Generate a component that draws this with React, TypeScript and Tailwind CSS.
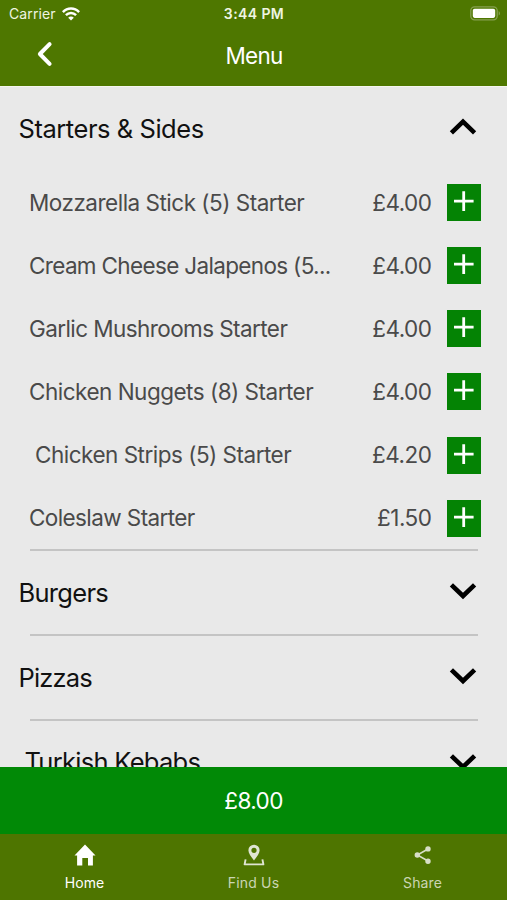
import React from "react";

type Item = { name: string; price: string; tracking?: string };

const items: Item[] = [
  { name: "Mozzarella Stick (5) Starter", price: "£4.00", tracking: "tracking-[-0.5px]" },
  { name: "Cream Cheese Jalapenos (5...", price: "£4.00", tracking: "tracking-[-0.66px]" },
  { name: "Garlic Mushrooms Starter", price: "£4.00", tracking: "tracking-[-0.58px]" },
  { name: "Chicken Nuggets (8) Starter", price: "£4.00", tracking: "tracking-[-0.5px]" },
  { name: "Chicken Strips (5) Starter", price: "£4.20", tracking: "pl-[6px] tracking-[-0.5px]" },
  { name: "Coleslaw Starter", price: "£1.50", tracking: "tracking-[-0.6px]" },
];

function Chevron({ up = false }: { up?: boolean }) {
  return (
    <svg width="28" height="18" viewBox="0 0 28 18" fill="none" stroke="#000" strokeWidth="4.6">
      <path d={up ? "M2.4 14.8 L14 3.6 L25.6 14.8" : "M2.4 2.8 L14 14 L25.6 2.8"} />
    </svg>
  );
}

function StatusBar() {
  return (
    <div className="flex h-[27px] items-center justify-between pl-[9px] pr-[6px] text-[14px] text-[#eef5e2]">
      <div className="flex w-[150px] items-center gap-[6px]">
        <span className="tracking-[0.1px]">Carrier</span>
        <svg width="18" height="14" viewBox="0 0 18 14" fill="none" stroke="#fff" strokeWidth="2.5">
          <path d="M0.9 5.2 C5.4 0.4 12.6 0.4 17.1 5.2" />
          <path d="M3.9 8.2 C6.8 5.3 11.2 5.3 14.1 8.2" />
          <path d="M9 13.6 L6.2 10.7 C7.7 9.2 10.3 9.2 11.8 10.7 Z" fill="#fff" stroke="none" />
        </svg>
      </div>
      <span className="mr-[2px] text-[14px] font-semibold tracking-[0.4px]">3:44 PM</span>
      <div className="flex w-[150px] justify-end">
        <svg width="31" height="15" viewBox="0 0 31 15">
          <rect x="0.8" y="0.8" width="26.4" height="13" rx="3.8" fill="none" stroke="#86a050" strokeWidth="1.3" />
          <rect x="2.8" y="2.7" width="22.4" height="9.2" rx="1.8" fill="#fff" />
          <path d="M28.7 5 C30.4 5.8 30.4 8.8 28.7 9.6 Z" fill="#86a050" />
        </svg>
      </div>
    </div>
  );
}

function NavBar() {
  return (
    <div className="grid h-[58px] grid-cols-[80px_1fr_80px] items-center text-white">
      <button className="flex justify-start pb-1 pl-9">
        <svg width="18" height="26" viewBox="0 0 18 26" fill="none" stroke="#fff" strokeWidth="4" strokeLinecap="round" strokeLinejoin="round">
          <path d="M13.6 3.2 L3.9 13 L13.6 22.8" />
        </svg>
      </button>
      <h1 className="pl-px text-center text-[22.5px] tracking-[-0.7px]">Menu</h1>
    </div>
  );
}

function ItemRow({ name, price, tracking }: Item) {
  return (
    <div className="flex h-[63.15px] items-center pl-[29px] pr-[26px] text-[22.5px] text-[#4a4a4a]">
      <div className="flex-1 whitespace-nowrap">
        <span className={tracking}>{name}</span>
      </div>
      <span className="mr-[15.5px] tracking-[-0.5px]">{price}</span>
      <button className="flex h-[37px] w-[34px] justify-center bg-[#048304] pt-[7px]">
        <svg width="20" height="20" viewBox="0 0 20 20" stroke="#fff" strokeWidth="2.8">
          <path d="M9.7 0.2 V20 M0 10.2 H19.6" />
        </svg>
      </button>
    </div>
  );
}

function Section({ title, spacing }: { title: string; spacing: string }) {
  return (
    <div className="flex h-[83.3px] shrink-0 items-center justify-between pl-[18.5px] pr-[30px] text-[25.5px] text-[#111]">
      <h2 className={spacing}>{title}</h2>
      <div className="pb-[3px]">
        <Chevron />
      </div>
    </div>
  );
}

function Divider() {
  return <div className="ml-[30px] mr-[29px] h-[2px] shrink-0 bg-[#c4c4c4]" />;
}

export default function App() {
  return (
    <div className="flex h-[900px] w-[507px] flex-col overflow-hidden bg-[#e9e9e9] font-['Inter',sans-serif]">
      <header className="h-[86px] shrink-0 bg-[#4e7700]">
        <StatusBar />
        <NavBar />
      </header>
      <main className="h-[681px] overflow-hidden border-t border-[#f4f6ee]">
        <div className="flex h-[84px] items-center justify-between pl-[18.5px] pr-[30px] text-[25.5px] text-[#111]">
          <h2 className="pt-px tracking-[-0.45px]">Starters &amp; Sides</h2>
          <div className="pb-[5px]">
            <Chevron up />
          </div>
        </div>
        <div className="-mb-px">
          {items.map((item) => (
            <ItemRow key={item.name} {...item} />
          ))}
        </div>
        <Divider />
        <Section title="Burgers" spacing="pt-px tracking-[-0.7px]" />
        <Divider />
        <Section title="Pizzas" spacing="pt-px tracking-[-0.85px]" />
        <Divider />
        <Section title="Turkish Kebabs" spacing="pb-px pl-[6px] tracking-[-0.72px]" />
      </main>
      <div className="flex h-[67px] shrink-0 items-center justify-center bg-[#018906] text-[22.5px] tracking-[-0.6px] text-white">£8.00</div>
      <nav className="grid h-[66px] shrink-0 grid-cols-3 bg-[#4e7500] text-[14px] text-[#cbd5b4]">
        <div className="flex flex-col items-center gap-[6px] pt-[10px] text-white">
          <svg width="22" height="22" viewBox="0 0 22 22" fill="#fff">
            <path d="M11 0.5 L21.5 11.5 H18.9 V21.5 H14 V14 H8.3 V21.5 H3.1 V11.5 H0.5 Z" />
          </svg>
          <span className="tracking-[0.1px]">Home</span>
        </div>
        <div className="flex flex-col items-center gap-[6px] pt-[10px]">
          <svg width="22" height="22" viewBox="0 0 22 22" fill="#dfe5d2">
            <path fillRule="evenodd" d="M11 16.4 C7.8 12.3 5.4 9.4 5.4 6.3 A5.6 5.6 0 0 1 16.6 6.3 C16.6 9.4 14.2 12.3 11 16.4 Z M11 3.7 A2.6 2.6 0 1 0 11 8.9 A2.6 2.6 0 1 0 11 3.7 Z" />
            <path d="M2.6 15.4 L1.6 20.4 H20.4 L19.4 15.4" fill="none" stroke="#dfe5d2" strokeWidth="1.9" strokeLinejoin="round" />
          </svg>
          <span className="tracking-[0.2px]">Find Us</span>
        </div>
        <div className="flex flex-col items-center gap-[6px] pt-[10px]">
          <svg width="22" height="22" viewBox="0 0 22 22" fill="#d8dfc8" stroke="#d8dfc8" strokeWidth="1.6">
            <path d="M16 5 L5.4 11 L16 17" fill="none" />
            <circle cx="16" cy="4.9" r="1.9" />
            <circle cx="5.3" cy="11" r="1.9" />
            <circle cx="16" cy="17.2" r="1.9" />
          </svg>
          <span className="tracking-[0.1px]">Share</span>
        </div>
      </nav>
    </div>
  );
}
